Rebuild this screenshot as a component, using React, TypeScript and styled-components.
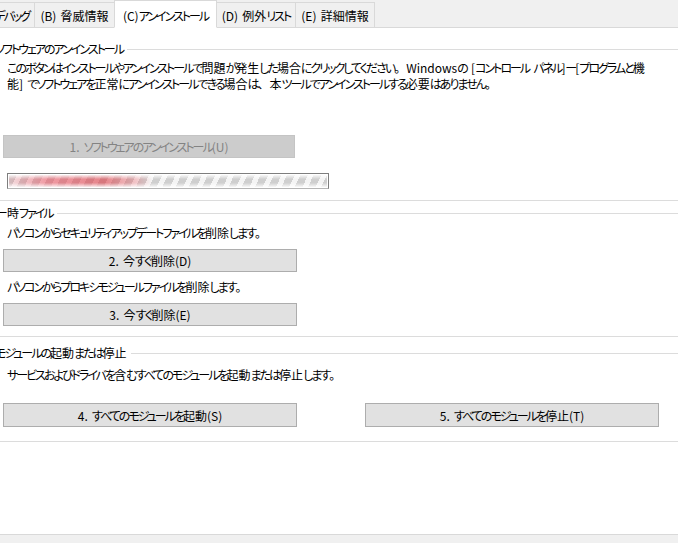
import React from "react";
import styled, { createGlobalStyle } from "styled-components";

const GlobalStyle = createGlobalStyle`
  html, body {
    margin: 0;
    padding: 0;
    background: #ffffff;
  }
  body {
    font-family: "Noto Sans CJK JP", "Noto Sans", sans-serif;
    font-size: 12px;
    word-spacing: 1.5px;
    color: #000;
  }
`;

// kana runs are set tighter than kanji, like the narrow UI font of the dialog
const KANA_RUN = /([\u3040-\u30ff]+)/;
const KANA_ONLY = /^[\u3040-\u30ff]+$/;

const Jp = ({ text }: { text: string }) => (
  <>
    {text.split(KANA_RUN).map((part, i) =>
      KANA_ONLY.test(part) ? <Kana key={i}>{part}</Kana> : part
    )}
  </>
);

const tabs = [
  { key: "A", label: "(A) デバッグ", width: 62 },
  { key: "B", label: "(B) 脅威情報", width: 81 },
  { key: "C", label: "(C) アンインストール", width: 103 },
  { key: "D", label: "(D) 例外リスト", width: 80 },
  { key: "E", label: "(E) 詳細情報", width: 80 },
];

const App = () => {
  const active = "C";

  return (
    <Viewport>
      <GlobalStyle />
      <Window>
        <TabStrip>
          {tabs.map((t) => (
            <Tab key={t.key} $active={t.key === active} $width={t.width}>
              <Jp text={t.label} />
            </Tab>
          ))}
        </TabStrip>

        <Panel>
          <Group $top={13} $bottom={11}>
            <GroupHeader>
              <GroupLabel>
                <Jp text="ソフトウェアのアンインストール" />
              </GroupLabel>
              <GroupRule />
            </GroupHeader>
            <Description $top={3}>
              <Jp text="このボタンはインストールやアンインストールで問題が発生した場合にクリックしてください。Windowsの [コントロール パネル]ー[プログラムと機" />
              <br />
              <Jp text="能] でソフトウェアを正常にアンインストールできる場合は、本ツールでアンインストールする必要はありません。" />
            </Description>
            <Button $top={43} $width={292} disabled>
              <Jp text="1. ソフトウェアのアンインストール(U)" />
            </Button>
            <Progress>
              <ProgressFill />
            </Progress>
          </Group>

          <Group $top={4} $bottom={10}>
            <GroupHeader>
              <GroupLabel>
                <Jp text="一時ファイル" />
              </GroupLabel>
              <GroupRule />
            </GroupHeader>
            <Description $top={4}>
              <Jp text="パソコンからセキュリティアップデートファイルを削除します。" />
            </Description>
            <Button $top={8}>
              <Jp text="2. 今すぐ削除(D)" />
            </Button>
            <Description $top={7}>
              <Jp text="パソコンからプロキシモジュールファイルを削除します。" />
            </Description>
            <Button $top={8}>
              <Jp text="3. 今すぐ削除(E)" />
            </Button>
          </Group>

          <Group $top={8} $bottom={14}>
            <GroupHeader>
              <GroupLabel>
                <Jp text="モジュールの起動または停止" />
              </GroupLabel>
              <GroupRule />
            </GroupHeader>
            <Description $top={6}>
              <Jp text="サービスおよびドライバを含むすべてのモジュールを起動または停止します。" />
            </Description>
            <ButtonRow>
              <Button $top={0}>
                <Jp text="4. すべてのモジュールを起動(S)" />
              </Button>
              <Button $top={0}>
                <Jp text="5. すべてのモジュールを停止(T)" />
              </Button>
            </ButtonRow>
          </Group>
        </Panel>

        <Footer />
      </Window>
    </Viewport>
  );
};

export default App;

const Kana = styled.span`
  font-feature-settings: "palt";
  letter-spacing: -2px;
`;

const Viewport = styled.div`
  width: 678px;
  height: 543px;
  overflow: hidden;
`;

/* the dialog is wider than the visible area; its left edge sits off screen */
const Window = styled.div`
  width: 712px;
  height: 543px;
  margin-left: -14px;
  display: flex;
  flex-direction: column;
  background: #ffffff;
`;

const TabStrip = styled.div`
  height: 27px;
  flex-shrink: 0;
  display: flex;
  align-items: flex-end;
  margin-left: -12px;
  background: #f0f0f0;
  border-bottom: 1px solid #d9d9d9;
`;

const Tab = styled.div<{ $active?: boolean; $width: number }>`
  box-sizing: border-box;
  width: ${({ $width }) => $width}px;
  flex-shrink: 0;
  height: ${({ $active }) => ($active ? "28px" : "25px")};
  margin-bottom: ${({ $active }) => ($active ? "-1px" : "0")};
  margin-left: -1px;
  padding-top: ${({ $active }) => ($active ? "3px" : "0")};
  display: flex;
  align-items: center;
  justify-content: center;
  font-size: 12px;
  white-space: nowrap;
  background: ${({ $active }) => ($active ? "#ffffff" : "#f0f0f0")};
  border: 1px solid #d9d9d9;
  border-bottom: ${({ $active }) => ($active ? "1px solid #ffffff" : "none")};
  position: relative;
  z-index: ${({ $active }) => ($active ? 1 : 0)};
`;

const Panel = styled.div`
  flex: 1;
  display: flex;
  flex-direction: column;
  background: #ffffff;
`;

const Group = styled.div<{ $top: number; $bottom: number }>`
  margin: ${({ $top }) => $top}px 0 0 5px;
  padding-bottom: ${({ $bottom }) => $bottom}px;
  border-bottom: 1px solid #dcdcdc;
  display: flex;
  flex-direction: column;
  align-items: flex-start;
`;

const GroupHeader = styled.div`
  align-self: stretch;
  height: 16px;
  display: flex;
  align-items: center;
  padding-left: 4px;
`;

const GroupLabel = styled.span`
  line-height: 16px;
  white-space: nowrap;
`;

const GroupRule = styled.div`
  flex: 1;
  height: 1px;
  margin-left: 4px;
  background: #dcdcdc;
`;

const Description = styled.p<{ $top: number }>`
  margin: ${({ $top }) => $top}px 0 0 16px;
  line-height: 16px;
  white-space: nowrap;
`;

const Button = styled.button<{ $top: number; $width?: number }>`
  box-sizing: border-box;
  width: ${({ $width }) => $width ?? 294}px;
  height: 23px;
  margin: ${({ $top }) => $top}px 0 0 12px;
  padding: 0;
  font-family: inherit;
  font-size: 12px;
  word-spacing: inherit;
  color: #000;
  background: #e1e1e1;
  border: 1px solid #adadad;
  border-radius: 0;

  &:disabled {
    color: #838383;
    background: #cccccc;
    border-color: #c4c4c4;
  }
`;

const ButtonRow = styled.div`
  display: flex;
  gap: 56px;
  margin-top: 20px;
  height: 24px;

  & > ${Button} {
    height: 24px;
  }
`;

const Progress = styled.div`
  box-sizing: border-box;
  width: 322px;
  height: 16px;
  margin: 15px 0 0 16px;
  border: 1px solid #7e7e7e;
  border-bottom-color: #b5b5b5;
  padding: 1px;
  background: #ffffff;
`;

const ProgressFill = styled.div`
  width: 100%;
  height: 100%;
  background:
    linear-gradient(
      to bottom,
      rgba(255, 255, 255, 0.85) 0,
      rgba(255, 255, 255, 0) 35%,
      rgba(255, 255, 255, 0) 65%,
      rgba(255, 255, 255, 0.85) 100%
    ),
    linear-gradient(
      to right,
      rgba(236, 80, 96, 0.15) 0,
      rgba(236, 80, 96, 0.55) 12%,
      rgba(220, 60, 70, 0.6) 30%,
      rgba(236, 90, 100, 0.3) 40%,
      rgba(236, 90, 100, 0) 45%
    ),
    repeating-linear-gradient(
      115deg,
      #cfcfcf 0,
      #cfcfcf 7px,
      #f4f4f4 7px,
      #f4f4f4 12px
    );
`;

const Footer = styled.div`
  height: 8px;
  flex-shrink: 0;
  background: #f0f0f0;
  border-top: 1px solid #d9d9d9;
`;
